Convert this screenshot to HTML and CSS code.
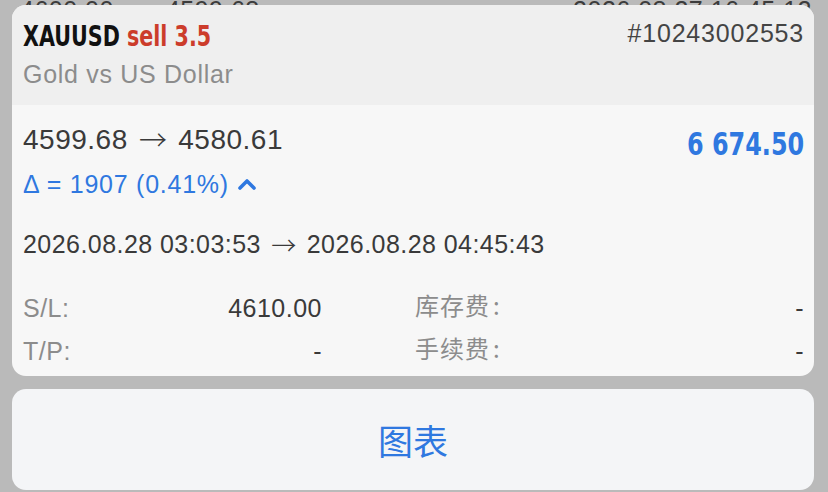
FILE: index.html
```html
<!DOCTYPE html>
<html lang="zh-CN">
<head>
    <meta charset="UTF-8">
    <meta name="viewport" content="width=device-width, initial-scale=1.0">
    <title>XAUUSD sell 3.5</title>
    <link rel="stylesheet" href="styles.css">
</head>
<body>
    <!-- list row behind the sheet, only its top edge shows -->
    <div class="list-peek">
        <span class="peek-a">4600.00</span>
        <span class="peek-b">4599.68</span>
        <span class="peek-time">2026.08.27 16:45:12</span>
    </div>

    <div class="sheet">
        <div class="sheet-head">
            <div class="head-row">
                <div class="title">XAUUSD <span class="side">sell 3.5</span></div>
                <div class="ticket">#10243002553</div>
            </div>
            <div class="subtitle">Gold vs US Dollar</div>
        </div>

        <div class="sheet-body">
            <div class="price-row">
                <div>
                    <div class="prices">4599.68 <span class="arrow">→</span> 4580.61</div>
                    <div class="delta">Δ = 1907 (0.41%)
                        <svg class="chevron" width="18" height="12" viewBox="0 0 18 12">
                            <polyline points="2,10 9,3 16,10" fill="none" stroke="#2f78e0" stroke-width="3.6" stroke-linecap="round" stroke-linejoin="round"/>
                        </svg>
                    </div>
                </div>
                <div class="profit">6 674.50</div>
            </div>

            <div class="times">2026.08.28 03:03:53 <span class="arrow">→</span> 2026.08.28 04:45:43</div>

            <div class="stats">
                <div class="stat"><span class="label">S/L:</span><span class="value">4610.00</span></div>
                <div class="stat"><span class="label cjk">库存费<span class="colon">:</span></span><span class="value">-</span></div>
                <div class="stat"><span class="label">T/P:</span><span class="value">-</span></div>
                <div class="stat"><span class="label cjk">手续费<span class="colon">:</span></span><span class="value">-</span></div>
            </div>
        </div>
    </div>

    <button class="chart-btn">图表</button>
</body>
</html>
```

FILE: styles.css
```css
body {
    margin: 0;
    width: 828px;
    height: 492px;
    overflow: hidden;
    background-color: #bababa;
    font-family: "Liberation Sans", Arial, "Noto Sans CJK SC", sans-serif;
    color: #3a3a3a;
}
.list-peek {
    height: 20px;
    display: flex;
    font-size: 25px;
    line-height: 20px;
    letter-spacing: 0.5px;
    color: #3c3c3c;
    overflow: hidden;
}
.peek-a {
    margin-left: 20px;
}
.peek-b {
    margin-left: 52px;
}
.peek-time {
    margin-left: auto;
    margin-right: 16px;
}
.sheet {
    position: relative;
    margin: -15px 14px 0 12px;
    border-radius: 14px;
    overflow: hidden;
    background-color: #f7f7f7;
}
.sheet-head {
    box-sizing: border-box;
    height: 100px;
    padding: 14px 10px 0 11px;
    background-color: #efefef;
}
.head-row {
    display: flex;
    justify-content: space-between;
    align-items: flex-start;
}
.title {
    font-family: "DejaVu Sans Condensed", sans-serif;
    font-weight: bold;
    font-size: 28px;
    line-height: 36px;
    color: #111;
    transform: scaleX(0.82);
    transform-origin: left center;
    white-space: nowrap;
}
.side {
    color: #cc3c2b;
}
.ticket {
    font-size: 25px;
    line-height: 28px;
    letter-spacing: 0.8px;
    color: #444;
}
.subtitle {
    font-size: 25px;
    line-height: 39px;
    letter-spacing: 0.7px;
    color: #8c8c8c;
}
.sheet-body {
    box-sizing: border-box;
    height: 271px;
    padding: 18px 10px 0 11px;
}
.price-row {
    display: flex;
    justify-content: space-between;
    align-items: flex-start;
}
.prices {
    height: 34px;
    font-size: 28px;
    line-height: 34px;
    letter-spacing: 0.5px;
    color: #3a3a3a;
}
.arrow {
    margin: 0 3px;
    font-family: "Noto Sans CJK SC", sans-serif;
    font-weight: 300;
    line-height: 10px;
    letter-spacing: 0;
    vertical-align: -2px;
}
.delta {
    display: flex;
    align-items: center;
    margin-top: 10px;
    font-size: 25px;
    line-height: 34px;
    letter-spacing: 0.75px;
    color: #2f78e0;
}
.chevron {
    margin-left: 9px;
}
.profit {
    font-family: "DejaVu Sans Condensed", sans-serif;
    font-weight: bold;
    font-size: 32px;
    line-height: 42px;
    color: #2f78e0;
    transform: scaleX(0.83);
    transform-origin: right center;
    white-space: nowrap;
}
.times {
    height: 34px;
    margin-top: 26px;
    font-size: 25px;
    line-height: 34px;
    letter-spacing: 0.45px;
    color: #3a3a3a;
}
.stats {
    display: grid;
    grid-template-columns: 299px 1fr;
    grid-auto-rows: 43px;
    column-gap: 93px;
    margin-top: 26px;
}
.stat {
    display: flex;
    justify-content: space-between;
    font-size: 25px;
    line-height: 43px;
    letter-spacing: 0.5px;
}
.label {
    color: #8c8c8c;
}
.label.cjk {
    font-family: "Noto Sans CJK SC", sans-serif;
    font-size: 24px;
    line-height: 35px;
    letter-spacing: 1px;
}
.colon {
    margin-left: 3px;
}
.value {
    color: #3a3a3a;
}
.chart-btn {
    display: block;
    box-sizing: border-box;
    width: 802px;
    height: 101px;
    margin: 13px 14px 0 12px;
    border: none;
    border-radius: 14px;
    background-color: #f4f5f7;
    font-family: "Noto Sans CJK SC", sans-serif;
    font-size: 35px;
    color: #2f78e0;
    cursor: pointer;
}
```
